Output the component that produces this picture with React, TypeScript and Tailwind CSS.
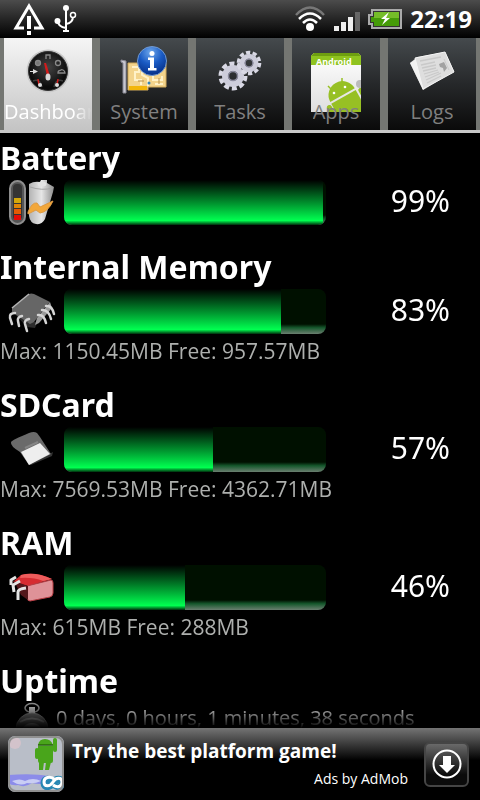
import type { ReactNode } from 'react';

const gauges = [
  { title: 'Battery', percent: 99, icon: <BatteryIcon /> },
  { title: 'Internal Memory', percent: 83, icon: <ChipIcon />, detail: 'Max: 1150.45MB Free: 957.57MB' },
  { title: 'SDCard', percent: 57, icon: <CardIcon />, detail: 'Max: 7569.53MB Free: 4362.71MB' },
  { title: 'RAM', percent: 46, icon: <RamIcon />, detail: 'Max: 615MB Free: 288MB' },
];

const tabs = [
  { label: 'Dashboard', icon: <DashboardIcon /> },
  { label: 'System', icon: <SystemIcon /> },
  { label: 'Tasks', icon: <TasksIcon /> },
  { label: 'Apps', icon: <AppsIcon /> },
  { label: 'Logs', icon: <LogsIcon /> },
];

function DashboardIcon() {
  return (
    <svg viewBox="0 0 48 48" className="size-12">
      <defs>
        <radialGradient id="dial" cx="50%" cy="40%">
          <stop offset="0" stopColor="#444" />
          <stop offset="1" stopColor="#0c0c0c" />
        </radialGradient>
      </defs>
      <circle cx="24" cy="25" r="21.500" fill="#c9c9c9" />
      <circle cx="24" cy="25" r="19.500" fill="url(#dial)" stroke="#333" />
      <g fill="none" stroke="#888" strokeWidth="1.3">
        <circle cx="14" cy="17" r="2.5" fill="#777" />
        <circle cx="34" cy="17" r="2.5" />
        <path d="M22 13v-4h4v4M34 27c0-4 3-2 3-3s4 0 4 3z" />
      </g>
      <path d="M6 25h3v-2l5 2.500-5 2.500v-2H6z" fill="#ddd" />
      <path d="M20 17h2l4 13h-3z" fill="#d21b1b" />
      <ellipse cx="24" cy="31" rx="2.500" ry="3.500" fill="#d8d8d8" />
      <path d="M9 35q7-3 9 6M39 35q-7-3-9 6" fill="none" stroke="#3c3c3c" strokeWidth="1.500" />
      <path d="M14 33l1 6M34 33l-1 6" stroke="#d21b1b" strokeWidth="1.500" />
      <circle cx="16" cy="39" r="2" fill="#ddd" />
      <circle cx="33" cy="39" r="2" fill="#ddd" />
    </svg>
  );
}

function SystemIcon() {
  return (
    <svg viewBox="0 0 48 48" className="size-12">
      <defs>
        <radialGradient id="info" cx="45%" cy="20%" r="80%">
          <stop offset="0" stopColor="#6fa8ec" />
          <stop offset="0.500" stopColor="#1a5bc4" />
          <stop offset="1" stopColor="#052f86" />
        </radialGradient>
      </defs>
      <path d="M8 17h38v24H28v3H8z" fill="#f3d48c" stroke="#d0a95a" />
      <path d="M9 40h18v4H9z" fill="#f2b60c" />
      <path d="M12 21h7v5h-4v8h6v5M22 20v9l6 3v8M33 30v4h9v-4M35 38h8" fill="none" stroke="#fff2c8" strokeWidth="2" />
      <path d="M25 22v5M24 35h-6M39 32v6" stroke="#b98f4b" strokeWidth="1" />
      <circle cx="29" cy="37" r="1.500" fill="#3584b6" />
      <path d="M1 14l5 1v32H3V17l-2-1z" fill="#c7c7d0" stroke="#8a8a96" />
      <circle cx="32" cy="15" r="14.500" fill="url(#info)" stroke="#7299ce" />
      <g fill="#fff">
        <circle cx="32" cy="7.500" r="2.500" />
        <path d="M28 11.500h6V22h2.500v2.500H28V22h2v-8h-2z" />
      </g>
    </svg>
  );
}

function Cog({ transform }: { transform: string }) {
  return (
    <g transform={transform}>
      <circle r="8" fill="none" stroke="#cdcddb" strokeWidth="6" />
      <circle r="12.500" fill="none" stroke="#d9d9e5" strokeWidth="4" strokeDasharray="5 2.854" />
      <circle r="4.500" fill="none" stroke="#8b8b9e" strokeWidth="1.500" />
    </g>
  );
}

function TasksIcon() {
  return (
    <svg viewBox="0 0 48 48" className="size-12">
      <Cog transform="translate(17 30)" />
      <Cog transform="translate(33 17) scale(0.85)" />
    </svg>
  );
}

function AppsIcon() {
  return (
    <svg viewBox="0 0 52 62" className="mt-1 h-[62px] w-[52px] shrink-0">
      <defs>
        <clipPath id="sheet"><path d="M1 2h50v60H1z" /></clipPath>
        <linearGradient id="paper" x2="0" y2="1">
          <stop offset="0" stopColor="#fff" />
          <stop offset="1" stopColor="#dedede" />
        </linearGradient>
      </defs>
      <path d="M1 6l3-3h44l3 3v56H1z" fill="url(#paper)" />
      <path d="M1 6l3-3h44l3 3v9H1z" fill="#8fc31f" />
      <path d="M1 6l3-3h44l3 3z" fill="#6e9e10" />
      <text x="6" y="15" fontSize="9" fontWeight="700" fill="#fff" fontFamily="Noto Sans, sans-serif">Android</text>
      <g clipPath="url(#sheet)">
        <g transform="translate(33 46) rotate(-29)" fill="#97c024">
          <path d="M-14-1a14 14 0 0 1 28 0z" />
          <path d="M-14 1h28v25h-28z" />
          <rect x="-20" y="1" width="5" height="17" rx="2.500" />
          <rect x="16" y="1" width="5" height="17" rx="2.500" />
        </g>
        <path d="M22 40l-4-4M32 33v-5" stroke="#97c024" strokeWidth="1.500" />
        <circle cx="24" cy="43" r="1.300" fill="#fff" />
        <circle cx="35" cy="37" r="1.300" fill="#fff" />
        <circle cx="50" cy="34" r="4" fill="#bbb" />
      </g>
    </svg>
  );
}

function LogsIcon() {
  return (
    <svg viewBox="0 0 48 48" className="size-12">
      <path d="M2 17l7-6 28-5 9 19-29 18-2 1z" fill="#a9a9a9" />
      <path d="M2 17l7-5 8 30-2 2z" fill="#f2f2f2" />
      <path d="M7 12l30-6 9 20-31 17z" fill="#dedede" stroke="#f5f5f5" />
      <path d="M12 15l21-4M13 19l14-3M14 22l14-3M15 25l13-3M16 28l14-4M17 31l14-5M18 34l15-7M19 37l14-7" stroke="#c9c9c9" strokeWidth="1.300" />
      <path d="M31 18l5-2 3 6-3 4-1-4-3-1z" fill="#a2a2a2" />
      <path d="M36 13l5 11" stroke="#ccc" />
    </svg>
  );
}

function BatteryIcon() {
  return (
    <svg viewBox="0 0 48 48" className="size-12">
      <defs>
        <linearGradient id="cell">
          <stop offset="0" stopColor="#b4b4b4" />
          <stop offset="0.500" stopColor="#e6e6e6" />
          <stop offset="1" stopColor="#8d8d8d" />
        </linearGradient>
      </defs>
      <rect x="2" y="3" width="15" height="43" rx="7.500" fill="#555" stroke="#8d8d8d" strokeWidth="2" />
      <rect x="5" y="6" width="9" height="36" rx="4" fill="#343434" />
      <path d="M6 20h7v5H6z" fill="#d3a70c" />
      <path d="M6 26h7v4H6z" fill="#de8508" />
      <path d="M6 31h7v5H6z" fill="#e35b05" />
      <path d="M6 37h7v5H6z" fill="#e20c08" />
      <path d="M21 6q5-3 11-2l1-2h6v3l7 4-1 5-8 27q-3 6-9 5-6-1-7-8z" fill="url(#cell)" />
      <ellipse cx="34" cy="6" rx="4.500" ry="2.500" fill="#e2e2e2" />
      <path d="M22 9q12 4 23 1" fill="none" stroke="#a4a4a4" />
      <path d="M20 34q4-10 9-9l3 4 13-6q-5 11-13 12l-4-3-8 4z" fill="#f2a73a" stroke="#dd9a44" />
    </svg>
  );
}

function ChipIcon() {
  return (
    <svg viewBox="0 0 48 48" className="size-12">
      <path d="M4 24l25 12-2 5-8-1z" fill="#2c2c2c" />
      <path d="M4 21l17-14q2-1 5 0l16 8-3 3-13 17-4 2L4 25z" fill="#666" />
      <path d="M4 21L21 7" stroke="#b5b5b5" strokeWidth="1.500" />
      <path d="M42 15l-13 16-2 7 4-2 13-15z" fill="#9a9a9a" />
      <g fill="none" stroke="#d4d4d4" strokeWidth="2.500" strokeLinecap="round">
        <path d="M7 26q-6 0-5 5l2 6M14 29q-5 1-4 5l1 5M21 32q-5 1-4 5l2 7" />
        <path d="M38 19q6-1 8 8M34 23q7 0 9 9M30 28q6-1 8 8" />
      </g>
    </svg>
  );
}

function CardIcon() {
  return (
    <svg viewBox="0 0 48 48" className="size-12">
      <path d="M21 40l24-13-1 4-21 9z" fill="#333" />
      <path d="M3 17q1-2 18-9 5-2 8 0l3 4 11 17-22 11-9-13q-10-6-9-10z" fill="#6a6a6a" />
      <path d="M13 27l19-9 10 11-21 11z" fill="#eee" />
      <path d="M17 23l13-6" stroke="#858585" strokeWidth="2" />
    </svg>
  );
}

function RamIcon() {
  return (
    <svg viewBox="0 0 48 48" className="size-12">
      <path d="M5 19l8-7q14-4 31 4l-24 7z" fill="#d62c31" />
      <path d="M13 12q14-4 31 4l-9 2q-10-4-23-3z" fill="#ee5c5c" />
      <path d="M19 23l24-6q2 0 2 3v10q0 3-3 4l-20 4q-3 0-3-4z" fill="#df9298" stroke="#b93e45" />
      <path d="M6 18l14 5v14l-7-5z" fill="#53171b" />
      <path d="M8 14l-5 3v5M12 18l-7 4 1 7M18 25q-8 1-8 4v8" fill="none" stroke="#e4e4e4" strokeWidth="3" strokeLinejoin="round" />
    </svg>
  );
}

function StopwatchIcon() {
  return (
    <svg viewBox="0 0 48 48" className="size-12">
      <ellipse cx="24" cy="7" rx="7" ry="4.500" fill="none" stroke="#999" strokeWidth="1.500" />
      <path d="M21 6h6v8h-6z" fill="#ccc" />
      <circle cx="24" cy="28" r="16" fill="#777" stroke="#999" />
      <path d="M12 21q12-7 24 0" fill="none" stroke="#bbb" strokeWidth="2" />
      <circle cx="24" cy="33" r="11" fill="#ddd" />
    </svg>
  );
}

function StatusBar() {
  return (
    <header className="flex h-[38px] shrink-0 items-center bg-linear-to-b/srgb from-[#4c4c4c] via-[#252525] to-black pr-2 pl-3">
      <svg viewBox="0 0 34 34" className="size-[34px]" aria-label="Warning">
        <path d="M12 26H4L17 4l13 22h-8" fill="none" stroke="#fff" strokeWidth="3" />
        <path d="M15 14h4v13h-4zM15 29h4v4h-4z" fill="#fff" />
      </svg>
      <svg viewBox="0 0 24 30" className="ml-2 h-[30px] w-6" aria-label="USB connected">
        <path d="M12 4v23M4 17q0 6 8 7M19 12q0 7-7 8" fill="none" stroke="#fff" strokeWidth="2" />
        <circle cx="12" cy="4" r="3" fill="#fff" />
        <circle cx="3.500" cy="17" r="3" fill="#fff" />
        <circle cx="19" cy="11" r="2.500" fill="#222" stroke="#fff" strokeWidth="1.500" />
        <path d="M9 26h6v2H9z" fill="#fff" />
      </svg>
      <div className="ml-auto flex items-center gap-2">
        <svg viewBox="0 0 32 28" className="h-7 w-8" aria-label="Wi-Fi">
          <g fill="none" strokeWidth="2.500">
            <path d="M2 10q14-15 28 0" stroke="#777" />
            <path d="M5 14q11-11 22 0M9 18q7-7 14 0" stroke="#fff" />
          </g>
          <circle cx="16" cy="22" r="4" fill="#fff" />
        </svg>
        <svg viewBox="0 0 26 20" className="mt-1 h-5 w-[26px]" aria-label="Signal">
          <path d="M0 15h5v5H0zM7 11h5v9H7zM14 6h5v14h-5z" fill="#eee" />
          <path d="M21 1h5v19h-5z" fill="#666" />
        </svg>
        <svg viewBox="0 0 34 20" className="h-5 w-[34px]" aria-label="Battery charging">
          <path d="M4 1h29v18H4v-4H1V6h3z" fill="#333" stroke="#aaa" strokeWidth="2" />
          <path d="M6 3h25v14H6v-4H3V8h3z" fill="#459b08" />
          <path d="M6 3h25v6H6z" fill="#75bd29" />
          <path d="M21 3l-8 7h4l-3 6 8-7h-4z" fill="#fff" />
        </svg>
        <time className="text-[24px] leading-[38px] font-bold text-white">22:19</time>
      </div>
    </header>
  );
}

function TabBar() {
  return (
    <nav className="flex h-[95px] shrink-0 border-b-3 border-[#c9c9c9] bg-[#747672] px-1">
      {tabs.map(({ label, icon }, i) => (
        <button
          key={label}
          type="button"
          aria-pressed={i === 0}
          className={`flex min-w-0 flex-1 flex-col items-center border-[#747672] pt-2 font-['Open_Sans',sans-serif] text-[20px] leading-7 not-last:border-r-8 ${
            i === 0
              ? 'bg-linear-to-b/srgb from-[#f5f5f5] to-[#c4c4c4] text-white'
              : 'bg-linear-to-b/srgb from-[#454a4d] via-[#26282a] to-[#0a0a0a] text-[#808080]'
          }`}
        >
          <span className="flex h-[52px] shrink-0 justify-center">{icon}</span>
          <span
            className={`relative max-w-full overflow-hidden whitespace-nowrap ${
              i === 0 ? 'mask-r-from-80% mask-r-to-100%' : ''
            }`}
          >
            {label}
          </span>
        </button>
      ))}
    </nav>
  );
}

function Heading({ children }: { children: ReactNode }) {
  return <h2 className="text-[32px] leading-10 font-bold text-white">{children}</h2>;
}

function Gauge({ title, percent, icon, detail }: { title: string; percent: number; icon: ReactNode; detail?: string }) {
  return (
    <section className="mb-[21px]">
      <Heading>{title}</Heading>
      <div className="flex h-12 items-center">
        <div className="w-16 shrink-0 pl-2">{icon}</div>
        <div
          role="progressbar"
          aria-label={title}
          aria-valuenow={percent}
          className="h-[45px] flex-1 overflow-hidden rounded-lg bg-linear-to-b/srgb from-[#001000] from-78% via-[#15582c] via-86% to-[#6b7f70]"
        >
          <div
            className="h-full bg-linear-to-b/srgb from-black via-[#00ff50] via-90% to-[#002b0c]"
            style={{ width: `${percent}%` }}
          />
        </div>
        <span className="w-[154px] pr-[30px] pb-0.5 text-right text-[30px] leading-10 text-white">{percent}%</span>
      </div>
      {detail && (
        <p className="pt-1 font-['Open_Sans',sans-serif] text-[21px] leading-[25px] text-[#aeb0ae]">{detail}</p>
      )}
    </section>
  );
}

function AdBanner() {
  return (
    <footer className="flex h-[72px] shrink-0 items-center bg-black bg-linear-to-b/srgb from-[#747474] to-black to-45% px-2">
      <svg viewBox="0 0 56 56" className="size-14">
        <defs>
          <clipPath id="tile"><rect width="56" height="56" rx="7" /></clipPath>
        </defs>
        <g clipPath="url(#tile)">
          <path d="M0 0h56v56H0z" fill="#b9bec8" />
          <circle cx="7" cy="7" r="6" fill="#d3c3cb" />
          <path d="M0 39q25-2 40 1v7q-8 2-16 0-7 5-14 2-6 1-10-2z" fill="#8c8ce9" />
          <path d="M4 45q8-3 13 0 8-4 16 0-6 3-14 2-7 4-15-2z" fill="#c9cdf4" />
          <g fill="#49a51b">
            <path d="M30 9q1-6 7-6t8 6zM30 10h15v15q0 2-2 2H32q-2 0-2-2z" />
            <rect x="45" y="2" width="4" height="14" rx="2" />
            <rect x="27" y="12" width="4" height="11" rx="2" />
            <path d="M31 26h5l-1 8h-4zM38 26h5l-2 8h-4z" />
          </g>
          <path d="M30 9h15" stroke="#27660b" strokeWidth="1.500" />
          <path d="M45 47c-3-5-9-5-9 0s6 5 9 0 9-5 9 0-6 5-9 0" fill="none" stroke="#2686b3" strokeWidth="7" />
          <path d="M46 43c-4-3-10-2-10 3s6 5 9 0 9-5 9 0-5 6-9 3" fill="none" stroke="#fff" strokeWidth="3" />
        </g>
        <rect x="1" y="1" width="54" height="54" rx="7" fill="none" stroke="#909090" strokeWidth="2" />
      </svg>
      <div className="flex h-full min-w-0 flex-1 flex-col justify-center gap-1 pr-4 pb-0.5 pl-2 text-white">
        <a href="#ad" className="font-['Open_Sans',sans-serif] text-[19px] leading-7 font-bold">
          Try the best platform game!
        </a>
        <span className="text-right font-['Open_Sans',sans-serif] text-[14px] leading-5">Ads by AdMob</span>
      </div>
      <button
        type="button"
        aria-label="Download"
        className="mr-[3px] flex size-[45px] items-center justify-center rounded-md border-2 border-[#454545] bg-linear-to-b/srgb from-[#696969] to-[#0b0b0b] to-75%"
      >
        <svg viewBox="0 0 30 30" className="size-[30px] shrink-0">
          <circle cx="15" cy="15" r="13.500" fill="none" stroke="#fff" strokeWidth="2" />
          <path d="M11 7h8v9h4l-8 8-8-8h4z" fill="#fff" />
        </svg>
      </button>
    </footer>
  );
}

export default function App() {
  return (
    <div className="flex h-screen flex-col bg-black font-['Noto_Sans',sans-serif]">
      <StatusBar />
      <TabBar />
      <main className="min-h-0 flex-1 overflow-hidden mask-b-from-[calc(100%-28px)] mask-b-to-100% pt-[5px]">
        {gauges.map((gauge) => (
          <Gauge key={gauge.title} {...gauge} />
        ))}
        <section>
          <Heading>Uptime</Heading>
          <div className="flex h-12 pl-2">
            <StopwatchIcon />
            <p className="font-['Open_Sans',sans-serif] text-[20px] leading-[34px] text-white">
              0 days, 0 hours, 1 minutes, 38 seconds
            </p>
          </div>
        </section>
      </main>
      <AdBanner />
    </div>
  );
}
